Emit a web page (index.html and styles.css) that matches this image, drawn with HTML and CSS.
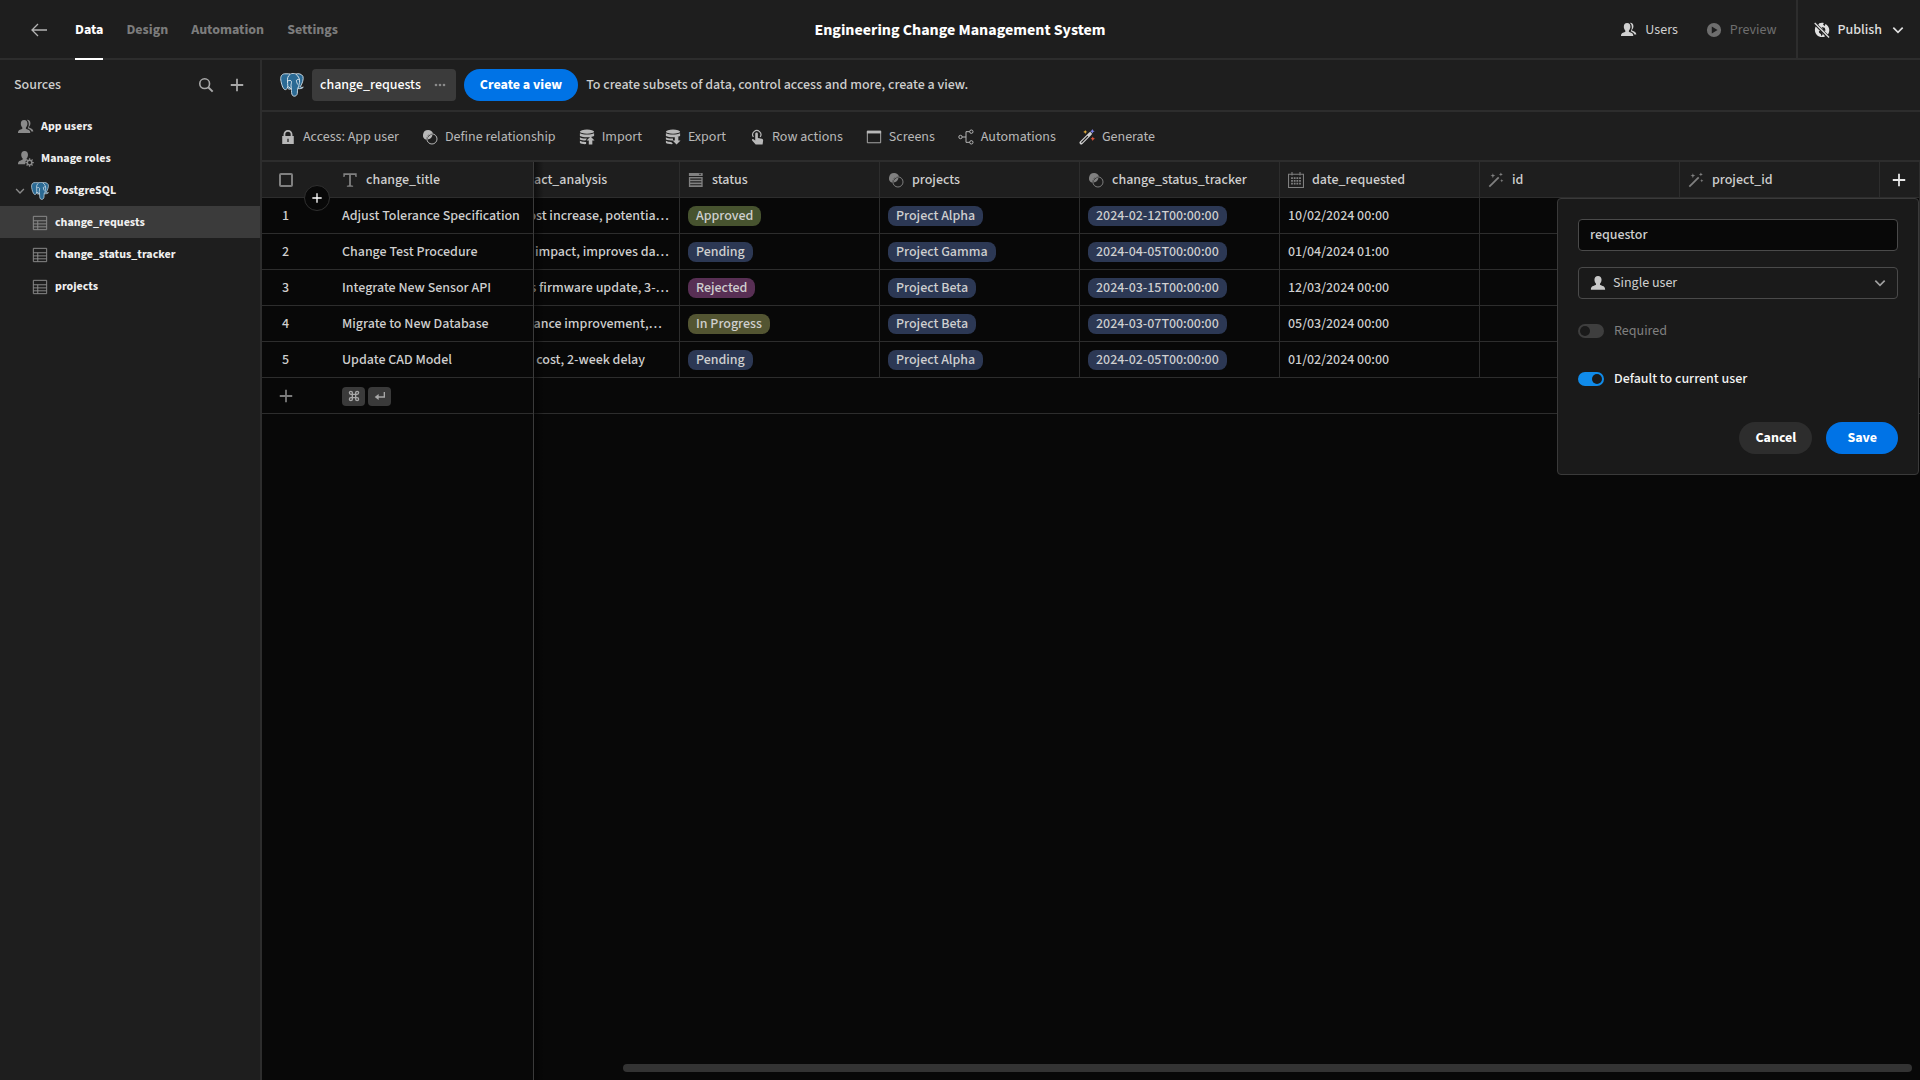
FILE: index.html
```html
<!DOCTYPE html>
<html lang="en">
<head>
<meta charset="utf-8">
<title>Engineering Change Management System</title>
<link rel="stylesheet" href="styles.css">
</head>
<body>
<svg class="sprite" aria-hidden="true">
  <symbol id="i-back" viewBox="0 0 18 18"><path d="M17 9H2M8 3L2 9l6 6" fill="none" stroke="currentColor" stroke-width="1.3"/></symbol>
  <symbol id="i-users" viewBox="1 1 17 17"><path d="M7.500 2C5 2 4 3.800 4 6c0 1.700.7 3 1.500 3.900.4.500.2 1.300-.3 1.600C3.400 12.300 1 12.600 1 15v1h13v-1c0-2.400-2.400-2.700-4.200-3.500-.5-.3-.7-1.100-.3-1.600C10.300 9 11 7.700 11 6c0-2.200-1-4-3.500-4z"/><path d="M11 1.800c2 0 3.200 1.500 3.200 3.700 0 1.600-.6 2.700-1.300 3.500-.4.500-.2 1.100.2 1.400 1.800.8 4.200 1.400 4.200 4H15.200c-.3-1.600-1.700-2.500-3.900-3.500.7-1 1.200-2.400 1.200-4.200 0-2-.6-3.500-2-4.600z"/></symbol>
  <symbol id="i-user" viewBox="0 0 18 18"><path d="M9 1C6.500 1 5 2.800 5 5.300c0 1.700.7 3.300 1.600 4.300.4.600.3 1.300-.3 1.600C4 12.300 1 12.500 1 16v.5h16V16c0-3.500-3-3.700-5.300-4.800-.6-.3-.7-1-.3-1.600.9-1 1.600-2.600 1.600-4.300C13 2.800 11.500 1 9 1z"/></symbol>
  <symbol id="i-roles" viewBox="1 1 17 17"><path d="M8 1C5.600 1 4.400 2.600 4.400 4.900c0 1.600.6 3 1.400 3.900.4.500.3 1.200-.2 1.500C3.500 11.300 1 11.600 1 15h7.500a5 5 0 0 1 2.300-4.600c-.6-.3-.9-.9-.5-1.600.8-.9 1.300-2.300 1.300-3.900C11.600 2.600 10.400 1 8 1z"/><circle cx="13.300" cy="13.300" r="2.400" fill="none" stroke="currentColor" stroke-width="1.500"/><path d="M13.300 8.800v2M13.300 15.800v2M8.800 13.300h2M15.800 13.300h2M10.100 10.100l1.400 1.400M15.100 15.100l1.400 1.400M10.100 16.500l1.400-1.400M15.100 11.500l1.400-1.400" stroke="currentColor" stroke-width="1.400"/></symbol>
  <symbol id="i-play" viewBox="0 0 18 18"><path fill-rule="evenodd" d="M9 1a8 8 0 1 0 0 16A8 8 0 0 0 9 1zM6.500 5.200v7.600L13 9z"/></symbol>
  <symbol id="i-globe" viewBox="0 0 18 18"><path d="M6 1.500C8 .6 10 .8 11 1.200l-.8 2 2 1.200.6-2.200C15.300 3.400 17.200 6 17.200 9c0 2-.6 3.600-1.600 5L4.800 3.200zM1.900 5.200l10.700 10.700c-1 .6-2.200 1-3.600 1.100-4.500 0-8-3.600-8-8 0-1.400.3-2.700.9-3.800z"/><path d="M8.500 5.500l3.500 1 1 3-2 .5zM5.500 10l2.500.5 2 3-1.500 2.500-.8-2.500-2-1.500z" fill="#1e1e1e"/><path d="M.8 1.200L17 17.400" stroke="currentColor" stroke-width="1.500"/></symbol>
  <symbol id="i-chev" viewBox="0 0 18 18"><path d="M2 5.500l7 7 7-7" fill="none" stroke="currentColor" stroke-width="2.500"/></symbol>
  <symbol id="i-search" viewBox="0 0 18 18"><circle cx="7.500" cy="7.500" r="5.500" fill="none" stroke="currentColor" stroke-width="1.800"/><path d="M11.500 11.500l5 5" stroke="currentColor" stroke-width="2.200"/></symbol>
  <symbol id="i-plus" viewBox="0 0 18 18"><path d="M9 2v14M2 9h14" stroke="currentColor" stroke-width="2"/></symbol>
  <symbol id="i-table" viewBox="0 0 18 18"><path d="M1.500 1.500h15v15h-15zM1.500 6.500h15M1.500 10h15M1.500 13.300h15M6.500 6.500v10" fill="none" stroke="currentColor" stroke-width="1.100"/></symbol>
  <symbol id="i-lock" viewBox="0 0 18 18"><path fill-rule="evenodd" d="M4 8V6a5 5 0 0 1 10 0v2h1.500v9h-13V8zm2 0h6V6a3 3 0 0 0-6 0zm2.300 3v3.500h1.400V11z"/></symbol>
  <symbol id="i-rel" viewBox="0 0 18 18"><path d="M6.800 1a5.800 5.800 0 0 0-2 11.200A6.800 6.800 0 0 1 12.400 5 5.800 5.800 0 0 0 6.800 1z"/><path d="M6.300 11.700a5.600 5.600 0 0 1 5.500-5.500 5.600 5.600 0 0 1-5.500 5.500z"/><circle cx="11.200" cy="11.200" r="5.700" fill="none" stroke="currentColor" stroke-width="1.100"/></symbol>
  <symbol id="i-import" viewBox="0 0 18 18"><ellipse cx="9" cy="3" rx="8" ry="2.300"/><path d="M1 4.800c3.500 2 12.500 2 16 0v3c-3.500 2-12.500 2-16 0z"/><path d="M1 9.300c2 1.500 5 1.700 8 1.400L7.300 13c-2.500 0-5-.3-6.300-1.200zM1 13.300c2 1.200 4.500 1.400 7 1.300V17c-3 .2-6-.3-7-1.600zM13 8.500l4.500 4.500H15v4.500h-4V13H8.500z"/></symbol>
  <symbol id="i-export" viewBox="0 0 18 18"><ellipse cx="9" cy="3" rx="8" ry="2.300"/><path d="M1 4.800c3.500 2 12.500 2 16 0v3c-3.500 2-12.500 2-16 0z"/><path d="M1 9.300c2 1.500 5 1.700 8 1.400V13c-2.500 0-6.500-.3-8-1.200zM1 13.300c2 1.200 4 1.400 6 1.300l2 2.400c-3 .2-7-.3-8-1.600zM13 17.500L8.500 13H11V8.500h4V13h2.500z"/></symbol>
  <symbol id="i-tap" viewBox="0 0 18 18"><path d="M5 9A4.600 4.600 0 1 1 12.500 9" fill="none" stroke="currentColor" stroke-width="1.300"/><path d="M7 5.500c0-2.200 3-2.200 3 0V10l4.500 1c1 .3 1.500 1 1.400 2l-.6 4.500H7.500L3.500 12.800c-.6-1 .6-2 1.500-1.300l2 1.500z"/></symbol>
  <symbol id="i-screen" viewBox="0 0 18 18"><path d="M1 2h16v3H1z"/><path d="M1.500 2.500h15v13h-15z" fill="none" stroke="currentColor"/></symbol>
  <symbol id="i-auto" viewBox="0 0 18 18"><g fill="none" stroke="currentColor" stroke-width="1.100"><circle cx="2.800" cy="9" r="1.900"/><circle cx="15" cy="3" r="1.900"/><circle cx="15" cy="15" r="1.900"/><path d="M4.700 9H9M13 3H9v12h4"/></g></symbol>
  <symbol id="i-magic" viewBox="0 0 18 18"><path d="M1.500 16.500L12 6" stroke="currentColor" stroke-width="2"/><path d="M5.500 1.500l.7 2 2 .7-2 .7-.7 2-.7-2-2-.7 2-.7zM14.500.5l.6 1.600 1.600.6-1.600.6-.6 1.600-.6-1.600-1.600-.6 1.600-.6zM15.500 8l.5 1.300 1.300.5-1.300.5-.5 1.300-.5-1.300-1.300-.5 1.300-.5z"/></symbol>
  <symbol id="i-gen" viewBox="0 0 18 18"><path d="M2.500 15.500L12.500 5.500" stroke="#d0d0d0" stroke-width="3.800" stroke-linecap="round"/><path d="M2.700 15.300L10 8" stroke="#1e1e1e" stroke-width="1.400"/><path d="M7 1l.7 1.600 1.600.7-1.600.7L7 5.600 6.300 4l-1.600-.7 1.600-.7z" fill="#e8b23c"/><path d="M15 0l.8 1.800 1.800.8-1.800.8L15 5.200l-.8-1.800-1.800-.8 1.800-.8z" fill="#7b7fe8"/><path d="M15.500 8.500l.8 1.700 1.700.8-1.700.8-.8 1.700-.8-1.700L13 11l1.700-.8z" fill="#e0563c"/></symbol>
  <symbol id="i-text" viewBox="0 0 18 18"><path d="M1.500 1.500h15v4h-1.300l-.6-2.200H10v11.500l2.500.6v1.100h-7v-1.100l2.500-.6V3.300H3.400l-.6 2.200H1.500z"/></symbol>
  <symbol id="i-select" viewBox="0 0 18 18"><path fill-rule="evenodd" d="M1 1h15.500v3.500H1zm11 1l1.500 1.600L15 2z"/><path fill-rule="evenodd" d="M1 5.500h15.500V17H1zM2.500 7.300v1.300H15V7.300zM2.500 10.500v1.300H15v-1.300zM2.500 13.700V15H15v-1.300z"/></symbol>
  <symbol id="i-cal" viewBox="0 0 18 18"><path d="M.6 2.500h16.800v14.900H.6zM4.500 0v4M13.500 0v4" fill="none" stroke="currentColor" stroke-width="1.200"/><path d="M3.500 6h2v2h-2zm3 0h2v2h-2zm3 0h2v2h-2zm3 0h2v2h-2zm-9 3h2v2h-2zm3 0h2v2h-2zm3 0h2v2h-2zm3 0h2v2h-2zm-9 3h2v2h-2zm3 0h2v2h-2zm3 0h2v2h-2zm3 0h2v2h-2z"/></symbol>
  <symbol id="i-cmd" viewBox="0 0 18 18"><path d="M6.500 6.500h5v5h-5zM6.500 6.500H4.300A2.200 2.200 0 1 1 6.500 4.300zM11.500 6.500V4.300a2.200 2.200 0 1 1 2.200 2.200zM6.500 11.500v2.200a2.200 2.200 0 1 1-2.200-2.200zM11.500 11.500h2.200a2.200 2.200 0 1 1-2.200 2.200z" fill="none" stroke="currentColor" stroke-width="2"/></symbol>
  <symbol id="i-enter" viewBox="0 0 18 18"><path d="M15.500 3v7.500H4" fill="none" stroke="currentColor" stroke-width="2"/><path d="M1 10.500L7 6v9z"/></symbol>
  <symbol id="i-more" viewBox="0 0 18 18"><circle cx="3" cy="9" r="2"/><circle cx="9" cy="9" r="2"/><circle cx="15" cy="9" r="2"/></symbol>
  <symbol id="i-pg" viewBox="0 0 24 24"><path d="M6 .8C2 .4.300 3 .8 7c.6 4 2 8.500 3.800 9.500 1.200.6 2-.6 3-1.500.9 1.300 2.400 1.400 3.800.8.2 2-.2 5.200 1.200 6.700 1.700 1.500 4.400.4 4.700-2 .2-2 .1-3.500.4-5 2 .5 4.600 0 5.600-1.300-1 .2-2.600.300-3-.5 2-3 3.600-8 2.600-10.400C21.500.8 18.500.300 16 1c-2-.8-4-.8-5.500 0C9 .8 7.500.8 6 .8z" fill="#2b6a94" stroke="#d8e4ec" stroke-width=".9"/><path d="M10 1.500C7.500 3 7.300 6 7.500 9c.2 2 .5 4.500-.2 6M16 1.300c2.700 2 4 5 3.600 8.200-.3 1.700-1 2.500-.8 4.700M8 8c1.200-1 3-.8 3.400.4.400 1.500-.6 3-.4 4.500.2 1 .4 2 .3 3M19.500 7c-1-.8-2.700-.6-3 .3-.2 1.500.6 2.800 1.200 4.200M8 13.500l3 2.200M17.500 15.300l1.200-1.500" fill="none" stroke="#d8e4ec" stroke-width="1"/></symbol>
</svg>

<div class="app">
  <header class="topbar">
    <nav class="tabs">
      <a href="#" class="back" aria-label="Back"><svg class="ic ic18"><use href="#i-back"/></svg></a>
      <a href="#" class="tab active">Data</a>
      <a href="#" class="tab">Design</a>
      <a href="#" class="tab">Automation</a>
      <a href="#" class="tab">Settings</a>
    </nav>
    <h1>Engineering Change Management System</h1>
    <div class="top-actions">
      <button class="act"><svg class="ic"><use href="#i-users"/></svg>Users</button>
      <button class="act dim"><svg class="ic"><use href="#i-play"/></svg>Preview</button>
      <button class="act publish"><svg class="ic"><use href="#i-globe"/></svg>Publish<svg class="ic ic12"><use href="#i-chev"/></svg></button>
    </div>
  </header>

  <div class="body">
    <aside class="sidebar">
      <div class="side-head">
        <h2>Sources</h2>
        <button aria-label="Search"><svg class="ic"><use href="#i-search"/></svg></button>
        <button aria-label="Add source"><svg class="ic"><use href="#i-plus"/></svg></button>
      </div>
      <nav class="tree">
        <a href="#"><svg class="ic"><use href="#i-users"/></svg>App users</a>
        <a href="#"><svg class="ic"><use href="#i-roles"/></svg>Manage roles</a>
        <a href="#" class="db"><svg class="ic ic8"><use href="#i-chev"/></svg><svg class="ic ic18"><use href="#i-pg"/></svg>PostgreSQL</a>
        <a href="#" class="leaf selected"><svg class="ic"><use href="#i-table"/></svg>change_requests</a>
        <a href="#" class="leaf"><svg class="ic"><use href="#i-table"/></svg>change_status_tracker</a>
        <a href="#" class="leaf"><svg class="ic"><use href="#i-table"/></svg>projects</a>
      </nav>
    </aside>

    <main class="main">
      <div class="viewbar">
        <svg class="ic ic24"><use href="#i-pg"/></svg>
        <button class="view">change_requests<svg class="ic ic12"><use href="#i-more"/></svg></button>
        <button class="btn primary">Create a view</button>
        <p>To create subsets of data, control access and more, create a view.</p>
      </div>
      <div class="toolbar">
        <button><svg class="ic"><use href="#i-lock"/></svg>Access: App user</button>
        <button><svg class="ic"><use href="#i-rel"/></svg>Define relationship</button>
        <button><svg class="ic"><use href="#i-import"/></svg>Import</button>
        <button><svg class="ic"><use href="#i-export"/></svg>Export</button>
        <button><svg class="ic"><use href="#i-tap"/></svg>Row actions</button>
        <button><svg class="ic"><use href="#i-screen"/></svg>Screens</button>
        <button><svg class="ic"><use href="#i-auto"/></svg>Automations</button>
        <button><svg class="ic"><use href="#i-gen"/></svg>Generate</button>
      </div>

      <div class="grid">
        <div class="pinned">
          <table>
            <colgroup><col class="c-num"><col></colgroup>
            <thead><tr><th><input type="checkbox" aria-label="Select all rows"></th><th><span class="head"><svg class="ic"><use href="#i-text"/></svg>change_title</span></th></tr></thead>
            <tbody>
              <tr><td>1</td><td>Adjust Tolerance Specification</td></tr>
              <tr><td>2</td><td>Change Test Procedure</td></tr>
              <tr><td>3</td><td>Integrate New Sensor API</td></tr>
              <tr><td>4</td><td>Migrate to New Database</td></tr>
              <tr><td>5</td><td>Update CAD Model</td></tr>
              <tr class="new"><td><svg class="ic"><use href="#i-plus"/></svg></td><td><span class="keys"><kbd><svg class="ic ic12"><use href="#i-cmd"/></svg></kbd><kbd><svg class="ic ic12"><use href="#i-enter"/></svg></kbd></span></td></tr>
            </tbody>
          </table>
          <button class="insert" aria-label="Insert row"><svg class="ic ic12"><use href="#i-plus"/></svg></button>
        </div>
        <div class="scroll">
          <table>
            <colgroup><col class="c-first"><col class="c"><col class="c"><col class="c"><col class="c"><col class="c"><col class="c"><col></colgroup>
            <thead><tr>
              <th><span class="cut">act_analysis</span></th>
              <th><span class="head"><svg class="ic"><use href="#i-select"/></svg>status</span></th>
              <th><span class="head"><svg class="ic"><use href="#i-rel"/></svg>projects</span></th>
              <th><span class="head"><svg class="ic"><use href="#i-rel"/></svg>change_status_tracker</span></th>
              <th><span class="head"><svg class="ic"><use href="#i-cal"/></svg>date_requested</span></th>
              <th><span class="head"><svg class="ic"><use href="#i-magic"/></svg>id</span></th>
              <th><span class="head"><svg class="ic"><use href="#i-magic"/></svg>project_id</span></th>
              <th class="addcol"><button aria-label="Add column"><svg class="ic"><use href="#i-plus"/></svg></button></th>
            </tr></thead>
            <tbody>
              <tr><td><span class="cut end">ost increase, potentia…</span></td><td><span class="pill green">Approved</span></td><td><span class="pill">Project Alpha</span></td><td><span class="pill">2024-02-12T00:00:00</span></td><td>10/02/2024 00:00</td><td></td><td></td><td></td></tr>
              <tr><td><span class="cut end">l impact, improves da…</span></td><td><span class="pill">Pending</span></td><td><span class="pill">Project Gamma</span></td><td><span class="pill">2024-04-05T00:00:00</span></td><td>01/04/2024 01:00</td><td></td><td></td><td></td></tr>
              <tr><td><span class="cut end">s firmware update, 3-…</span></td><td><span class="pill pink">Rejected</span></td><td><span class="pill">Project Beta</span></td><td><span class="pill">2024-03-15T00:00:00</span></td><td>12/03/2024 00:00</td><td></td><td></td><td></td></tr>
              <tr><td><span class="cut end wrap">ance improvement,…</span></td><td><span class="pill olive">In Progress</span></td><td><span class="pill">Project Beta</span></td><td><span class="pill">2024-03-07T00:00:00</span></td><td>05/03/2024 00:00</td><td></td><td></td><td></td></tr>
              <tr><td><span class="cut end short">h cost, 2-week delay</span></td><td><span class="pill">Pending</span></td><td><span class="pill">Project Alpha</span></td><td><span class="pill">2024-02-05T00:00:00</span></td><td>01/02/2024 00:00</td><td></td><td></td><td></td></tr>
              <tr class="new"><td colspan="8"></td></tr>
            </tbody>
          </table>
          <div class="hbar"></div>
        </div>
        <form class="popover">
          <input class="field" type="text" value="requestor" aria-label="Column name">
          <div class="picker">
            <svg class="ic"><use href="#i-user"/></svg>
            <select class="field" aria-label="Column type"><option>Single user</option></select>
            <svg class="ic ic12"><use href="#i-chev"/></svg>
          </div>
          <label class="switch off"><input type="checkbox" disabled>Required</label>
          <label class="switch"><input type="checkbox" checked>Default to current user</label>
          <div class="buttons">
            <button type="button" class="btn">Cancel</button>
            <button type="button" class="btn primary">Save</button>
          </div>
        </form>
      </div>
    </main>
  </div>
</div>
</body>
</html>
```
FILE: styles.css
```css
:root {
  --bg: #1e1e1e;
  --line: #2d2d2d;
  --text: #d0d0d0;
  --blue: #0073e6;
}
* { box-sizing: border-box; }
body {
  margin: 0;
  background: #080808;
  color: var(--text);
  font: 500 14px/18px "Source Sans 3", "Noto Sans CJK SC", sans-serif;
}
button, input, select { font: inherit; color: inherit; }
button { background: none; border: 0; padding: 0; display: flex; align-items: center; }
a { color: inherit; text-decoration: none; }
h1, h2, p { margin: 0; }
.sprite { display: none; }
.ic { width: 16px; height: 16px; flex: none; fill: currentColor; display: block; }
.ic8 { width: 10px; height: 10px; }
.ic12 { width: 12px; height: 12px; }
.ic18 { width: 18px; height: 18px; }
.ic24 { width: 24px; height: 24px; }

.app { display: flex; flex-direction: column; height: 100vh; }
.topbar {
  display: grid;
  grid-template-columns: 1fr auto 1fr;
  height: 60px;
  background: var(--bg);
  border-bottom: 2px solid var(--line);
}
.tabs { display: flex; gap: 23px; padding-left: 30px; font-weight: 700; color: #7c7c7c; }
.back { display: flex; align-items: center; margin-right: 4px; color: #b4b4b4; }
.tab { height: 60px; line-height: 60px; }
.tab.active { color: #fff; border-bottom: 2px solid #fff; }
h1 { font-size: 16px; line-height: 60px; font-weight: 700; color: #fff; }
.top-actions { display: flex; justify-content: flex-end; }
.act { gap: 8px; margin-right: 28px; font-weight: 400; }
.act.dim { color: #6e6e6e; margin-right: 19px; }
.act.publish { margin: 0; padding: 0 16px; border-left: 2px solid var(--line); font-weight: 500; color: #e0e0e0; }
.publish .ic12 { margin-left: 2px; }

.body { display: flex; flex: 1; min-height: 0; }
.sidebar { width: 262px; flex: none; background: var(--bg); border-right: 2px solid var(--line); }
.side-head { display: flex; align-items: center; gap: 15px; height: 50px; padding: 0 15px 0 14px; }
.side-head h2 { flex: 1; font-size: 14px; font-weight: 500; }
.side-head button { color: #a8a8a8; }
.tree { font-size: 12px; font-weight: 700; color: #f0f0f0; }
.tree a { display: flex; align-items: center; gap: 7px; height: 32px; padding: 2px 0 0 18px; }
.tree .ic { color: #8a8a8a; }
.tree .db { gap: 6px; padding-left: 15px; }
.tree .leaf { padding-left: 32px; }
.tree .selected { background: #3b3b3b; }

.main { flex: 1; min-width: 0; display: flex; flex-direction: column; }
.viewbar, .toolbar { display: flex; align-items: center; background: var(--bg); border-bottom: 2px solid var(--line); }
.viewbar { height: 52px; gap: 8px; padding: 0 18px; }
.view { gap: 13px; height: 32px; padding: 0 10px 0 8px; border-radius: 4px; background: #3b3b3b; color: #fff; }
.view .ic { color: #8a8a8a; }
.btn { height: 32px; padding: 0 16px; border-radius: 16px; background: #2d2d2d; color: #fff; font-weight: 700; justify-content: center; }
.btn.primary { background: var(--blue); }
.toolbar { height: 50px; gap: 23px; padding: 2px 18px 0; color: #b8b8b8; }
.toolbar button { gap: 7px; font-weight: 400; }

.grid { position: relative; flex: 1; min-height: 0; display: flex; }
.pinned { position: relative; width: 272px; flex: none; border-right: 1px solid #3a3a3a; }
.scroll { position: relative; flex: 1; min-width: 0; overflow: hidden; }
.pinned::after { content: ""; position: absolute; left: 100%; top: 0; bottom: 0; width: 10px; margin-left: 1px; z-index: 1; background: linear-gradient(to right, rgba(0,0,0,.5), transparent); }
table { width: 100%; table-layout: fixed; border-collapse: separate; border-spacing: 0; }
.c-num { width: 72px; }
.c-first { width: 146px; }
.c { width: 200px; }
th, td { height: 36px; padding: 1px 8px 0; text-align: left; font-weight: 500; border-bottom: 1px solid var(--line); white-space: nowrap; overflow: hidden; }
th { background: var(--bg); }
.scroll th, .scroll td { border-right: 1px solid var(--line); }
.scroll .new td { border-right: 0; }
.pinned th:first-child, .pinned td:first-child { padding: 0 16px; }
.pinned td:first-child { padding-left: 20px; }
.pinned .new td:first-child { padding-left: 16px; color: #7c7c7c; }
.head { display: flex; align-items: center; gap: 8px; }
.head .ic { color: #808080; }
.pinned th input { appearance: none; display: block; width: 14px; height: 14px; margin: 0 1px; border: 2px solid #808080; border-radius: 2px; }
.cut { display: block; margin-left: -8px; }
.cut.end { display: flex; justify-content: flex-end; padding-right: 2px; }
.cut.wrap { padding-right: 9px; }
.cut.short { padding-right: 26px; }
.pill { display: inline-block; height: 20px; line-height: 20px; padding: 0 8px; border-radius: 8px; background: #2c3854; vertical-align: middle; }
.pill.green { background: #47532f; }
.pill.pink { background: #582f54; }
.pill.olive { background: #535532; }
.addcol button { color: #e8e8e8; padding-left: 3px; }
.keys { display: flex; gap: 3px; }
kbd { display: flex; align-items: center; justify-content: center; width: 23px; height: 19px; border-radius: 4px; background: #3a3a3a; color: #a8a8a8; }
.insert { position: absolute; left: 42px; top: 23px; width: 26px; height: 26px; justify-content: center; border: 1px solid #303030; border-radius: 50%; background: #080808; color: #fff; }
.hbar { position: absolute; left: 89px; right: 8px; bottom: 8px; height: 8px; border-radius: 4px; background: #333; }

.popover { position: absolute; right: 1px; top: 36px; width: 362px; padding: 20px; border: 1px solid #3a3a3a; border-radius: 4px; background: #1a1a1a; display: flex; flex-direction: column; gap: 16px; }
.field { width: 100%; height: 32px; padding: 0 11px; border: 1px solid #4a4a4a; border-radius: 4px; background: #080808; outline: 0; }
.picker { display: grid; grid-template-columns: 12px 16px 1fr 12px 12px; align-items: center; }
.picker > * { grid-row: 1; }
.picker .field { grid-column: 1 / -1; appearance: none; padding-left: 34px; background: none; font-weight: 400; }
.picker .ic { grid-column: 2; color: #c8c8c8; }
.picker .ic12 { grid-column: 4; color: #a0a0a0; }
.switch { display: flex; align-items: center; gap: 10px; height: 32px; color: #f4f4f4; }
.switch.off { color: #808080; font-weight: 400; }
.switch input { appearance: none; display: flex; width: 26px; height: 14px; margin: 0; padding: 2px; border-radius: 7px; background: #108bea; justify-content: flex-end; }
.switch input::before { content: ""; width: 10px; height: 10px; border-radius: 50%; background: #1a1a1a; }
.switch.off input { background: #3e3e3e; justify-content: flex-start; }
.buttons { display: flex; justify-content: flex-end; gap: 14px; padding-top: 11px; }
.buttons .primary { padding: 0 21px; }
```
